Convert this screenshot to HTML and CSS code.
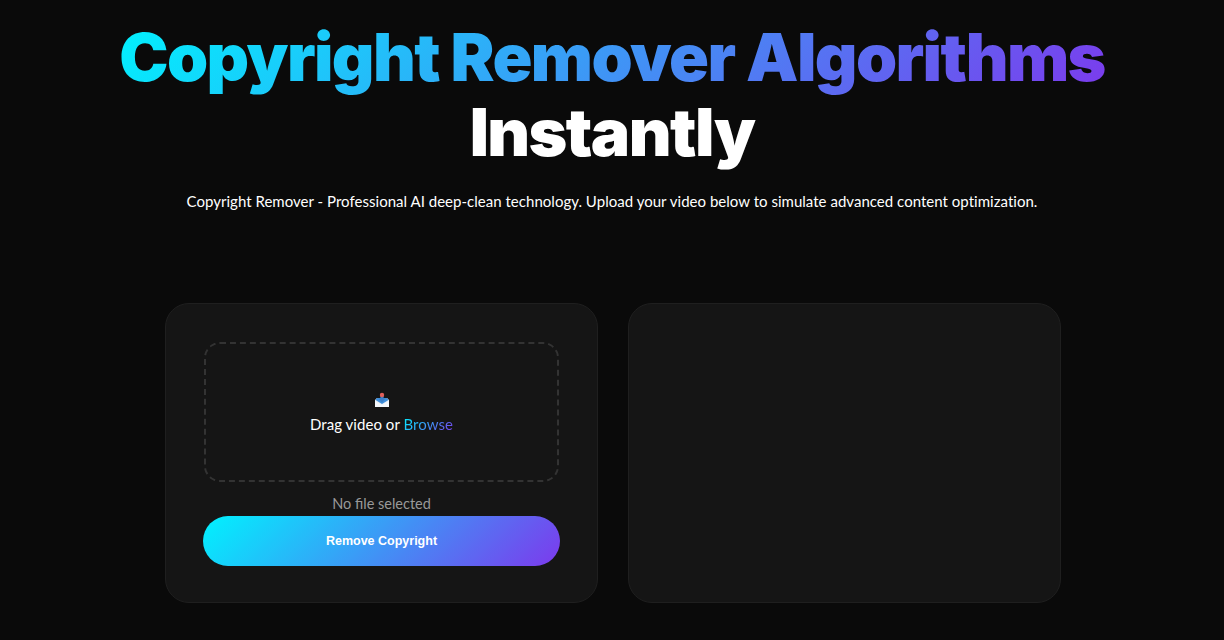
FILE: index.html
```html
<!DOCTYPE html>
<html lang="en">
<head>
    <meta charset="UTF-8">
    <meta name="viewport" content="width=device-width, initial-scale=1.0">
    <title>Copyright Remover</title>
    <link rel="stylesheet" href="styles.css">
</head>
<body>
    <!-- Заголовок -->
    <header class="hero">
        <h1 class="hero-title"><span class="gradient-text">Copyright Remover Algorithms</span><br>Instantly</h1>
        <p class="hero-sub">Copyright Remover - Professional AI deep-clean technology. Upload your video below to simulate advanced content optimization.</p>
    </header>

    <!-- Карточки -->
    <main class="panels">
        <section class="panel">
            <div class="drop-zone">
                <svg class="drop-icon" viewBox="0 0 16 16" width="16" height="16" aria-hidden="true">
                    <path d="M1 8 L3 6 H13 L15 8 V15 H1 Z" fill="#e8eef5"/>
                    <path d="M3 6 H13 L14.5 8 L8 12 L1.5 8 Z" fill="#3f8fdc"/>
                    <path d="M1 9 L8 13 L15 9 V15 H1 Z" fill="#f4f7fb"/>
                    <path d="M6.4 3.5 H9.6 V6.5 H11.5 L8 10.5 L4.5 6.5 H6.4 Z" fill="#3a7fc8"/>
                    <circle cx="8" cy="3" r="2.2" fill="#e0605a"/>
                </svg>
                <p class="drop-text">Drag video or <span class="gradient-text">Browse</span></p>
            </div>
            <p class="file-name">No file selected</p>
            <button class="remove-button">Remove Copyright</button>
        </section>
        <section class="panel"></section>
    </main>
</body>
</html>
```

FILE: styles.css
```css
/* Общие стили */
body {
    margin: 0;
    height: 640px;
    overflow: hidden;
    background-color: #0a0a0a;
    color: #ffffff;
    font-family: "Lato", sans-serif;
}
.gradient-text {
    background: linear-gradient(135deg, #00f2fe, #7c3aed);
    -webkit-background-clip: text;
    background-clip: text;
    color: transparent;
}
/* Заголовок */
.hero {
    padding-top: 20px;
    text-align: center;
}
.hero-title {
    margin: 0;
    font-family: "Inter", sans-serif;
    font-size: 66px;
    line-height: 75px;
    font-weight: 900;
    letter-spacing: -1.6px;
}
.hero-sub {
    margin: 20px 0 0;
    font-size: 15px;
    line-height: 22px;
    letter-spacing: 0.025px;
}
/* Карточки */
.panels {
    display: flex;
    justify-content: center;
    gap: 30px;
    margin-top: 91px;
    padding-left: 2px;
}
.panel {
    width: 433px;
    height: 300px;
    padding: 38px;
    box-sizing: border-box;
    background-color: #151515;
    border: 1px solid #1f1f1f;
    border-radius: 24px;
}
.drop-zone {
    display: flex;
    flex-direction: column;
    align-items: center;
    justify-content: center;
    height: 140px;
    padding-top: 2px;
    box-sizing: border-box;
    border: 2px dashed #333333;
    border-radius: 16px;
}
.drop-icon {
    margin-bottom: 5px;
}
.drop-text {
    margin: 0;
    font-size: 15px;
    line-height: 22px;
    letter-spacing: 0.05px;
}
.file-name {
    margin: 12px 0 0;
    text-align: center;
    font-size: 14.5px;
    line-height: 20px;
    color: #999999;
}
.remove-button {
    display: block;
    width: 357px;
    height: 50px;
    margin: 2px 0 0 -1px;
    border: none;
    border-radius: 25px;
    background: linear-gradient(135deg, #00f2fe, #7c3aed);
    color: #ffffff;
    font-family: "Liberation Sans", Arial, sans-serif;
    font-size: 12.5px;
    font-weight: bold;
}
```
